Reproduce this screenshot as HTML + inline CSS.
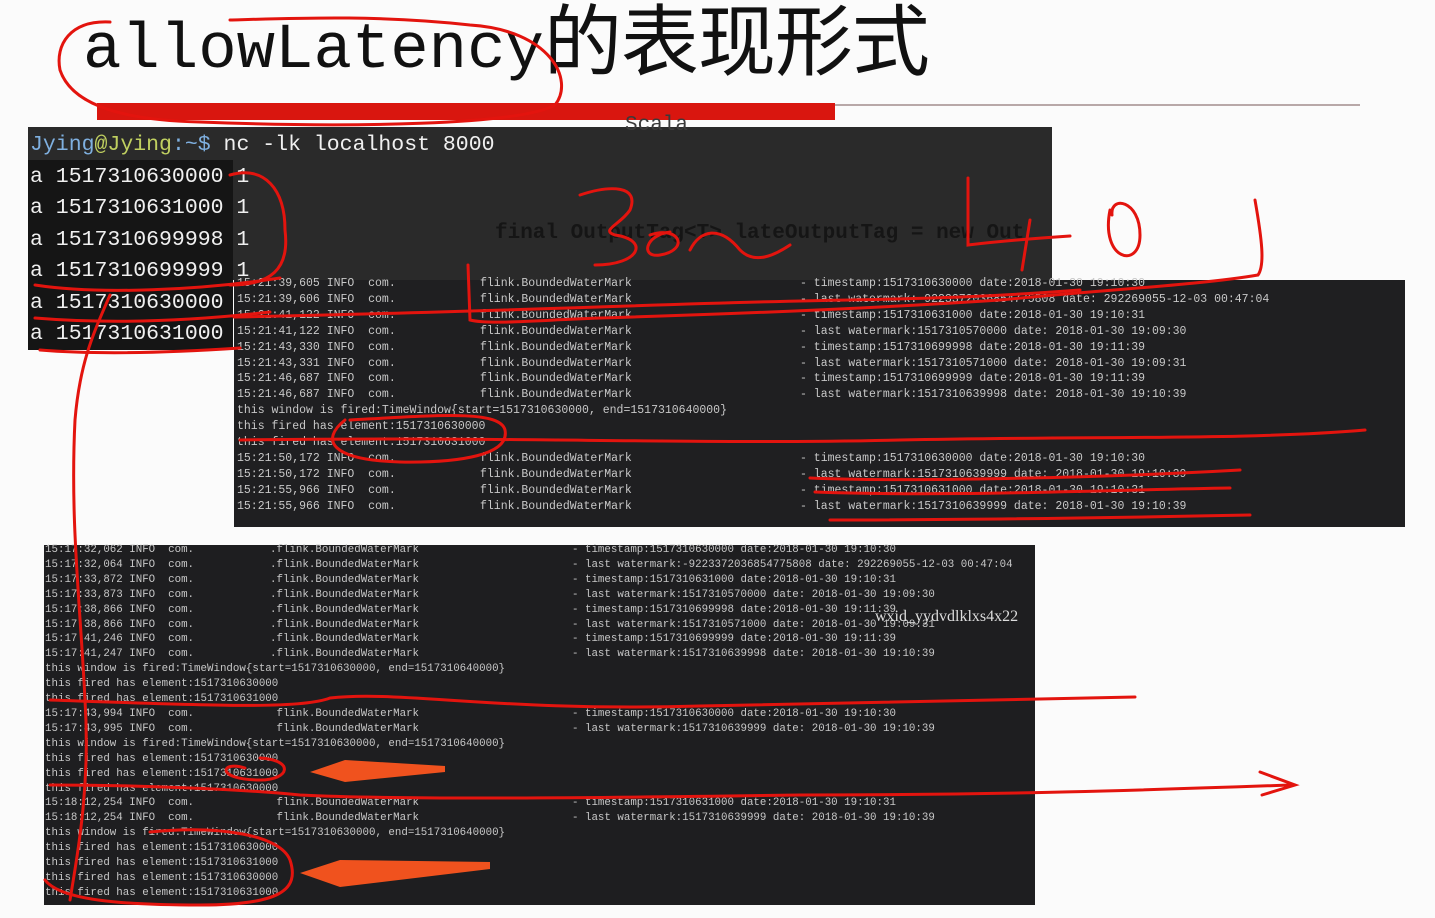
<!DOCTYPE html>
<html><head><meta charset="utf-8"><style>
body{margin:0;width:1435px;height:918px;background:#fbfbfb;position:relative;overflow:hidden;font-family:"Liberation Mono",monospace}
.a{position:absolute}
pre{margin:0;position:absolute;font-family:"Liberation Mono",monospace;white-space:pre}
.t2{font-size:11.5px;line-height:15.9px;color:#c8c8c8}
.t3{font-size:10.8px;line-height:14.9px;color:#c8c8c8}
</style></head><body>
<div class="a" style="left:83px;top:-6px;font-size:64px;line-height:84px;color:#111;font-family:'Liberation Mono',monospace;">allowLatency<span style="font-family:'Noto Sans CJK SC',sans-serif;font-size:78px;vertical-align:-2px;letter-spacing:-1px">的表现形式</span></div>
<div class="a" style="left:97px;top:103px;width:738px;height:17px;background:#d9160f"></div>
<div class="a" style="left:835px;top:104px;width:525px;height:2px;background:#b8a8a8"></div>

<div class="a" style="left:28px;top:127px;width:1024px;height:153px;background:#2a2a2a"></div>
<div class="a" style="left:28px;top:160px;width:205px;height:190px;background:#151515"></div>
<pre style="left:495px;top:222px;font-size:21px;color:#151515;font-weight:bold">final OutputTag&lt;T&gt; lateOutputTag = new Out</pre>
<pre style="left:625px;top:114px;font-size:21px;color:#3a3a3a">Scala</pre>
<pre style="left:30px;top:130px;font-size:21.5px;line-height:31.5px;color:#f0f0f0"><span style="color:#7fb0e0">Jying</span><span style="color:#c0d060">@Jying</span><span style="color:#7fb0e0">:~$</span> nc -lk localhost 8000
a 1517310630000 1
a 1517310631000 1
a 1517310699998 1
a 1517310699999 1
a 1517310630000
a 1517310631000</pre>

<div class="a" style="left:234px;top:280px;width:1171px;height:247px;background:#1f1f21"></div>
<pre class="t2" style="left:237px;top:276px">15:21:39,605 INFO  com.
15:21:39,606 INFO  com.
15:21:41,122 INFO  com.
15:21:41,122 INFO  com.
15:21:43,330 INFO  com.
15:21:43,331 INFO  com.
15:21:46,687 INFO  com.
15:21:46,687 INFO  com.
this window is fired:TimeWindow{start=1517310630000, end=1517310640000}
this fired has element:1517310630000
this fired has element:1517310631000
15:21:50,172 INFO  com.
15:21:50,172 INFO  com.
15:21:55,966 INFO  com.
15:21:55,966 INFO  com.</pre>
<pre class="t2" style="left:480px;top:276px">flink.BoundedWaterMark
flink.BoundedWaterMark
flink.BoundedWaterMark
flink.BoundedWaterMark
flink.BoundedWaterMark
flink.BoundedWaterMark
flink.BoundedWaterMark
flink.BoundedWaterMark



flink.BoundedWaterMark
flink.BoundedWaterMark
flink.BoundedWaterMark
flink.BoundedWaterMark</pre>
<pre class="t2" style="left:800px;top:276px">- timestamp:1517310630000 date:2018-01-30 19:10:30
- last watermark:-9223372036854775808 date: 292269055-12-03 00:47:04
- timestamp:1517310631000 date:2018-01-30 19:10:31
- last watermark:1517310570000 date: 2018-01-30 19:09:30
- timestamp:1517310699998 date:2018-01-30 19:11:39
- last watermark:1517310571000 date: 2018-01-30 19:09:31
- timestamp:1517310699999 date:2018-01-30 19:11:39
- last watermark:1517310639998 date: 2018-01-30 19:10:39



- timestamp:1517310630000 date:2018-01-30 19:10:30
- last watermark:1517310639999 date: 2018-01-30 19:10:39
- timestamp:1517310631000 date:2018-01-30 19:10:31
- last watermark:1517310639999 date: 2018-01-30 19:10:39</pre>

<div class="a" style="left:44px;top:545px;width:991px;height:360px;background:#1e1e20"></div>
<pre class="t3" style="left:45px;top:543px">15:17:32,062 INFO  com.
15:17:32,064 INFO  com.
15:17:33,872 INFO  com.
15:17:33,873 INFO  com.
15:17:38,866 INFO  com.
15:17:38,866 INFO  com.
15:17:41,246 INFO  com.
15:17:41,247 INFO  com.
this window is fired:TimeWindow{start=1517310630000, end=1517310640000}
this fired has element:1517310630000
this fired has element:1517310631000
15:17:43,994 INFO  com.
15:17:43,995 INFO  com.
this window is fired:TimeWindow{start=1517310630000, end=1517310640000}
this fired has element:1517310630000
this fired has element:1517310631000
this fired has element:1517310630000
15:18:12,254 INFO  com.
15:18:12,254 INFO  com.
this window is fired:TimeWindow{start=1517310630000, end=1517310640000}
this fired has element:1517310630000
this fired has element:1517310631000
this fired has element:1517310630000
this fired has element:1517310631000</pre>
<pre class="t3" style="left:270px;top:543px">.flink.BoundedWaterMark
.flink.BoundedWaterMark
.flink.BoundedWaterMark
.flink.BoundedWaterMark
.flink.BoundedWaterMark
.flink.BoundedWaterMark
.flink.BoundedWaterMark
.flink.BoundedWaterMark



 flink.BoundedWaterMark
 flink.BoundedWaterMark




 flink.BoundedWaterMark
 flink.BoundedWaterMark</pre>
<pre class="t3" style="left:572px;top:543px">- timestamp:1517310630000 date:2018-01-30 19:10:30
- last watermark:-9223372036854775808 date: 292269055-12-03 00:47:04
- timestamp:1517310631000 date:2018-01-30 19:10:31
- last watermark:1517310570000 date: 2018-01-30 19:09:30
- timestamp:1517310699998 date:2018-01-30 19:11:39
- last watermark:1517310571000 date: 2018-01-30 19:09:31
- timestamp:1517310699999 date:2018-01-30 19:11:39
- last watermark:1517310639998 date: 2018-01-30 19:10:39



- timestamp:1517310630000 date:2018-01-30 19:10:30
- last watermark:1517310639999 date: 2018-01-30 19:10:39




- timestamp:1517310631000 date:2018-01-30 19:10:31
- last watermark:1517310639999 date: 2018-01-30 19:10:39</pre>

<svg class="a" style="left:0;top:0" width="1435" height="918" fill="none" stroke="#e3140e" stroke-width="3" stroke-linecap="round">
<path d="M110 22 C70 20 55 45 60 70 C70 100 110 120 200 122 C350 128 520 125 555 105 C575 80 550 30 470 25 C380 15 300 18 230 20"/>
<path d="M230 175 C265 165 285 190 285 230 C290 270 270 285 230 285 M35 285 C100 295 200 290 280 278"/>
<path d="M35 318 C120 325 200 320 270 312 M40 350 C100 355 180 352 240 348"/>
<path d="M110 295 C95 330 80 360 75 420 C70 520 80 600 85 700 C90 780 80 840 70 900"/>
<path d="M580 195 C610 185 640 185 630 210 C620 225 600 230 615 235 C650 240 640 265 595 265"/>
<path d="M650 235 C680 225 690 250 660 255 C640 258 645 235 670 232 M690 250 C700 230 720 225 740 250 C755 265 775 255 790 245"/>
<path d="M968 178 L968 245 C1010 240 1040 238 1070 236 M1030 220 L1022 270"/>
<path d="M1110 210 C1100 260 1140 270 1140 235 C1140 200 1110 195 1112 215"/>
<path d="M1255 200 C1262 240 1265 265 1258 275 C1200 285 1100 290 1000 300 C850 310 700 315 600 318 C540 320 490 325 470 320 L468 265"/>
<path d="M234 317 C500 312 700 302 850 300 C950 298 1000 296 1080 290"/>
<path d="M240 440 C500 436 700 445 900 440 C1100 436 1250 440 1365 430"/>
<path d="M345 420 C320 440 330 460 400 462 C460 463 510 455 505 430 C500 410 440 415 350 420"/>
<path d="M810 478 C900 482 1100 478 1240 470 M815 492 C950 497 1100 490 1230 488 M830 520 C950 520 1100 518 1250 515"/>
<path d="M50 700 C200 705 300 710 330 698 C400 690 500 712 700 706 C900 702 1050 700 1135 697"/>
<path d="M50 785 C150 785 250 790 300 795 C400 800 600 798 800 795 C1000 795 1150 790 1290 785 M1260 772 L1295 785 L1262 795"/>
<path d="M245 768 C220 760 215 780 260 780 C290 780 295 760 260 758"/>
<path d="M150 832 C220 825 280 835 290 860 C300 890 280 905 200 905 C120 905 60 900 45 880"/>
</svg>
<svg class="a" style="left:0;top:0" width="1435" height="918">
<polygon points="310,772 345,760 445,766 445,772 345,782" fill="#f0521e"/>
<polygon points="300,873 340,860 490,862 490,869 340,887" fill="#f0521e"/>
</svg>
<div class="a" style="left:875px;top:608px;font-family:'Liberation Serif',serif;font-size:16px;color:#ddd">wxid_yydvdlklxs4x22</div>
</body></html>
